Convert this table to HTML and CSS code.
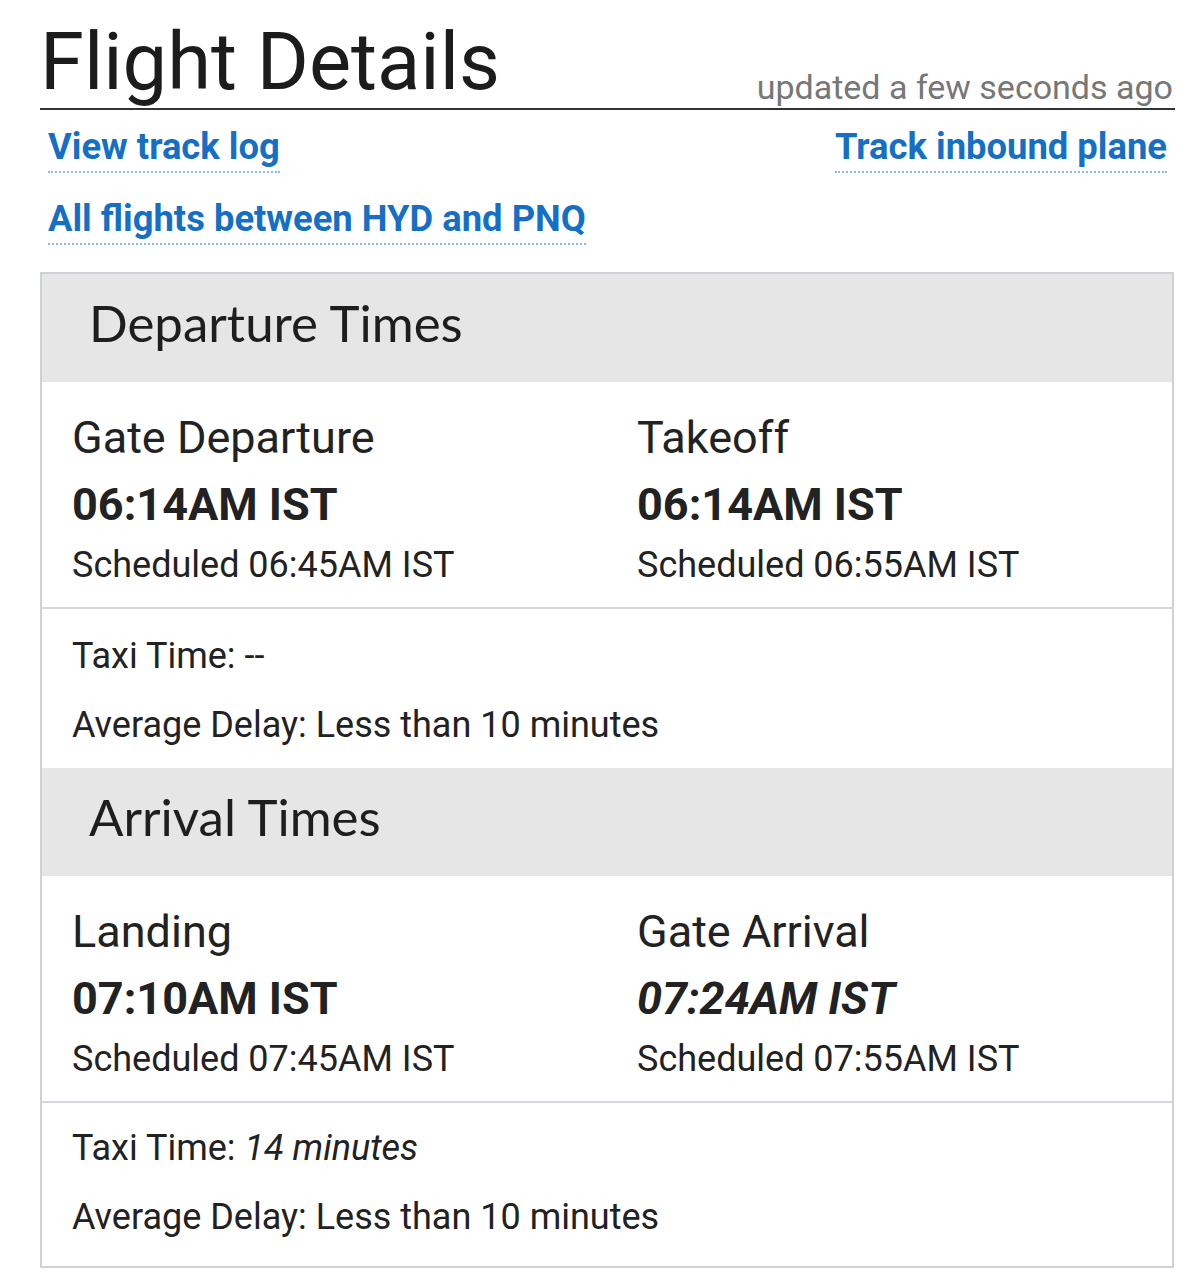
FILE: index.html
```html
<!DOCTYPE html>
<html>
<head>
<meta charset="utf-8">
<link rel="stylesheet" href="styles.css">
</head>
<body>
<div class="page">
  <div class="header">
    <h1 class="title">Flight Details</h1>
    <span class="updated">updated a few seconds ago</span>
  </div>
  <div class="links">
    <div class="link-row">
      <a class="link" href="#">View track log</a>
      <a class="link" href="#">Track inbound plane</a>
    </div>
    <div class="link-row">
      <a class="link" href="#">All flights between HYD and PNQ</a>
    </div>
  </div>
  <div class="card">
    <div class="band"><h2 class="band-title">Departure Times</h2></div>
    <div class="times">
      <div class="col">
        <div class="label">Gate Departure</div>
        <div class="time">06:14AM IST</div>
        <div class="sched">Scheduled 06:45AM IST</div>
      </div>
      <div class="col">
        <div class="label">Takeoff</div>
        <div class="time">06:14AM IST</div>
        <div class="sched">Scheduled 06:55AM IST</div>
      </div>
    </div>
    <div class="extra">
      <div class="line">Taxi Time: --</div>
      <div class="line second">Average Delay: Less than 10 minutes</div>
    </div>
    <div class="band"><h2 class="band-title">Arrival Times</h2></div>
    <div class="times">
      <div class="col">
        <div class="label">Landing</div>
        <div class="time">07:10AM IST</div>
        <div class="sched">Scheduled 07:45AM IST</div>
      </div>
      <div class="col">
        <div class="label">Gate Arrival</div>
        <div class="time est">07:24AM IST</div>
        <div class="sched">Scheduled 07:55AM IST</div>
      </div>
    </div>
    <div class="extra last">
      <div class="line">Taxi Time: <em>14 minutes</em></div>
      <div class="line second">Average Delay: Less than 10 minutes</div>
    </div>
  </div>
</div>
</body>
</html>
```
FILE: styles.css
```css
html, body {
  margin: 0;
  padding: 0;
  background: #ffffff;
}
body {
  font-family: Roboto, "Liberation Sans", sans-serif;
  color: #222222;
}
.page {
  width: 1135px;
  margin-left: 40px;
}
.header {
  display: flex;
  justify-content: space-between;
  align-items: flex-end;
  padding-top: 17px;
  padding-bottom: 1px;
  border-bottom: 2px solid #333333;
}
.title {
  margin: 0;
  font-family: Roboto, sans-serif;
  font-weight: 400;
  font-size: 79.5px;
  line-height: 90px;
  color: #1c1c1c;
}
.updated {
  font-size: 34px;
  color: #777777;
  line-height: 40px;
  margin-right: 2px;
}
.links {
  padding: 15px 8px 0 8px;
  display: flex;
  flex-direction: column;
  gap: 24px;
}
.link-row {
  display: flex;
  justify-content: space-between;
}
.link {
  font-weight: 700;
  font-size: 36.4px;
  line-height: 44px;
  color: #1570c5;
  text-decoration: none;
  padding-bottom: 2px;
  border-bottom: 2px dotted #8cbbe8;
}
.card {
  margin-top: 27px;
  width: 1134px;
  box-sizing: border-box;
  border: 2px solid #cdd2d9;
}
.band {
  background: #e6e6e6;
  height: 108px;
  box-sizing: border-box;
  padding: 18px 0 0 47px;
}
.band-title {
  margin: 0;
  font-family: Lato, sans-serif;
  font-weight: 400;
  font-size: 51px;
  line-height: 61px;
  color: #1e1e1e;
}
.times {
  display: grid;
  grid-template-columns: 565px 1fr;
  padding: 30px 30px 20px 30px;
  border-bottom: 2px solid #d4d8de;
}
.label {
  font-size: 45px;
  line-height: 52px;
}
.time {
  margin-top: 15px;
  font-size: 45px;
  font-weight: 700;
  line-height: 52px;
}
.time.est {
  font-style: italic;
}
.sched {
  margin-top: 12px;
  font-size: 36px;
  line-height: 44px;
}
.extra {
  padding: 25px 30px 21px 30px;
}
.extra.last {
  padding-top: 23px;
  padding-bottom: 27px;
}
.line {
  font-size: 36px;
  line-height: 44px;
}
.line.second {
  margin-top: 25px;
}
.line em {
  font-style: italic;
}
```
